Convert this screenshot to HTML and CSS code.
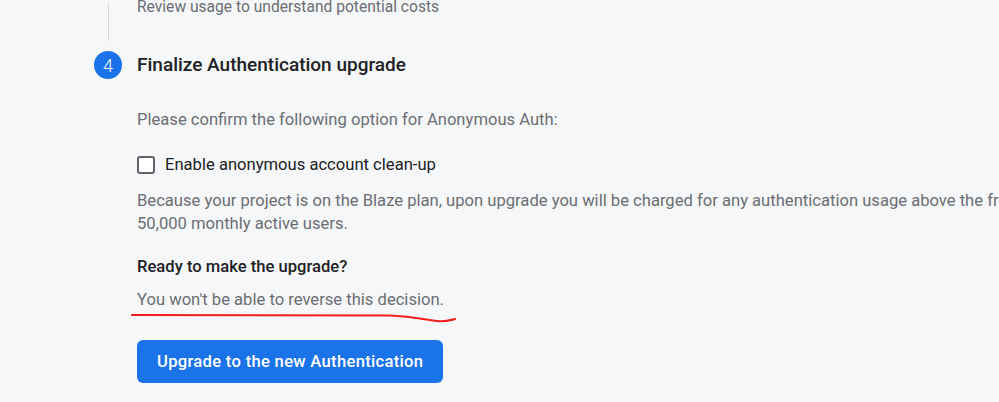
FILE: index.html
```html
<!DOCTYPE html>
<html lang="en">
<head>
  <meta charset="UTF-8" />
  <title>Finalize Authentication upgrade</title>
  <link rel="stylesheet" href="styles.css">
</head>
<body>

  <div class="stepper">
    <!-- previous step tail -->
    <div class="step prev">
      <div class="rail"><div class="rail-line"></div></div>
      <div class="step-body">
        <p class="muted">Review usage to understand potential costs</p>
      </div>
    </div>

    <!-- step 4 -->
    <div class="step current">
      <div class="rail"><div class="step-num">4</div></div>
      <div class="step-body">
        <h3 class="step-title">Finalize Authentication upgrade</h3>

        <p class="muted confirm">Please confirm the following option for Anonymous Auth:</p>

        <label class="check-row">
          <span class="checkbox"></span>
          <span>Enable anonymous account clean-up</span>
        </label>

        <p class="muted notice">Because your project is on the Blaze plan, upon upgrade you will be charged for any authentication usage above the free tier of<br>50,000 monthly active users.</p>

        <h4 class="ready">Ready to make the upgrade?</h4>
        <p class="muted warn">
          <span class="marked">You won't be able to reverse this decision.
            <svg class="scribble" width="330" height="14" viewBox="0 0 330 14">
              <path d="M1 3 L258 3.5 C282 4.5 296 8 306 9 C314 10 318 8.5 324 7" fill="none" stroke="#f0211a" stroke-width="2.2" stroke-linecap="round"/>
            </svg>
          </span>
        </p>

        <button class="btn-primary">Upgrade to the new Authentication</button>
      </div>
    </div>
  </div>

</body>
</html>
```

FILE: styles.css
```css
* {
  box-sizing: border-box;
  margin: 0;
  padding: 0;
}

body {
  font-family: Roboto, 'Liberation Sans', sans-serif;
  background: #f6f7f9;
  color: #202124;
  font-size: 16.6px;
  overflow: hidden;
  width: 999px;
  height: 402px;
}

.stepper {
  padding-left: 94px;
  margin-top: -3px;
}

.step {
  display: flex;
  gap: 15px;
}

.rail {
  width: 28px;
  flex-shrink: 0;
  display: flex;
  justify-content: center;
}

.rail-line {
  width: 1px;
  height: 38px;
  margin-top: 6px;
  background: #d5d7da;
}

.step-body {
  white-space: nowrap;
}

.muted {
  color: #6b6e72;
  line-height: 23px;
}

.prev .muted {
  font-size: 15.6px;
  line-height: 21px;
}

.current {
  margin-top: 10px;
}

.step-num {
  width: 28px;
  height: 28px;
  border-radius: 50%;
  background: #1a73e8;
  color: white;
  font-size: 18px;
  font-weight: 300;
  display: flex;
  align-items: center;
  justify-content: center;
}

.step-title {
  font-size: 19px;
  font-weight: 500;
  line-height: 28px;
  color: #202124;
}

.confirm {
  margin-top: 29px;
}

.check-row {
  display: flex;
  align-items: center;
  gap: 10px;
  margin-top: 22px;
  line-height: 24px;
}

.checkbox {
  width: 18px;
  height: 18px;
  border: 2px solid #5f6368;
  border-radius: 3px;
  background: white;
}

.notice {
  margin-top: 12px;
}

.ready {
  font-size: 16.6px;
  font-weight: 500;
  line-height: 24px;
  margin-top: 20px;
}

.warn {
  margin-top: 9px;
}

.marked {
  position: relative;
  display: inline-block;
}

.scribble {
  position: absolute;
  left: -6px;
  top: 24px;
}

.btn-primary {
  margin-top: 29px;
  height: 43px;
  padding: 0 20px;
  border: none;
  border-radius: 6px;
  background: #1a73e8;
  color: white;
  font-family: inherit;
  font-size: 16.6px;
  font-weight: 500;
  letter-spacing: 0.3px;
}
```
